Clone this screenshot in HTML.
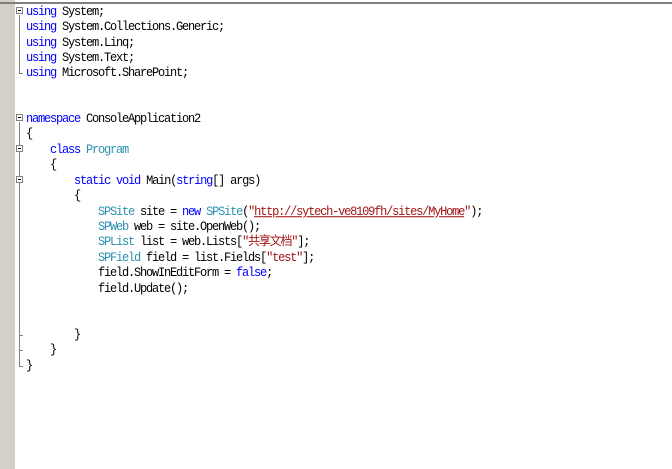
<!DOCTYPE html>
<html><head><meta charset="utf-8"><style>
body{margin:0;width:672px;height:469px;background:#fff;overflow:hidden;position:relative;font-family:"Liberation Mono","Noto Sans CJK SC",monospace;}
.g{position:absolute;left:0;top:0;width:15px;height:469px;background:#d4d0c8;}
.top{position:absolute;left:0;top:2px;width:672px;height:2px;background:#808080;}
.l{position:absolute;left:26px;font-size:12px;letter-spacing:-1.2px;line-height:14px;white-space:pre;color:#000;transform:scaleY(1.05);margin-top:1px}
.k{color:#0000ff}.t{color:#2b91af}.s{color:#a31515}.u{text-decoration:underline}
.f{position:absolute;left:16px;width:7px;height:7px;border:1px solid #808080;box-sizing:border-box;background:#fff;}
.f:after{content:"";position:absolute;left:1px;top:2px;width:3px;height:1px;background:#000}
.v{position:absolute;left:19px;width:1px;background:#808080}
.h{position:absolute;left:19px;height:1px;width:4px;background:#808080}
</style></head><body>
<div class="g"></div><div class="top"></div>
<div class="f" style="top:7px"></div><div class="v" style="top:15px;height:58px"></div><div class="h" style="top:73px"></div>
<div class="f" style="top:114px"></div><div class="v" style="top:122px;height:244px"></div><div class="h" style="top:366px"></div>
<div class="f" style="top:145px"></div><div class="f" style="top:176px"></div>
<div class="h" style="top:350px"></div><div class="h" style="top:335px"></div>
<div class="l" style="top:4px"><span class="k">using</span> System;</div>
<div class="l" style="top:19px"><span class="k">using</span> System.Collections.Generic;</div>
<div class="l" style="top:35px"><span class="k">using</span> System.Linq;</div>
<div class="l" style="top:50px"><span class="k">using</span> System.Text;</div>
<div class="l" style="top:65px"><span class="k">using</span> Microsoft.SharePoint;</div>
<div class="l" style="top:111px"><span class="k">namespace</span> ConsoleApplication2</div>
<div class="l" style="top:126px">{</div>
<div class="l" style="top:142px">    <span class="k">class</span> <span class="t">Program</span></div>
<div class="l" style="top:157px">    {</div>
<div class="l" style="top:173px">        <span class="k">static</span> <span class="k">void</span> Main(<span class="k">string</span>[] args)</div>
<div class="l" style="top:188px">        {</div>
<div class="l" style="top:204px">            <span class="t">SPSite</span> site = <span class="k">new</span> <span class="t">SPSite</span>(<span class="s">"<span class="u">http://sytech-ve8109fh/sites/MyHome</span>"</span>);</div>
<div class="l" style="top:219px">            <span class="t">SPWeb</span> web = site.OpenWeb();</div>
<div class="l" style="top:234px">            <span class="t">SPList</span> list = web.Lists[<span class="s">"共享文档"</span>];</div>
<div class="l" style="top:250px">            <span class="t">SPField</span> field = list.Fields[<span class="s">"test"</span>];</div>
<div class="l" style="top:265px">            field.ShowInEditForm = <span class="k">false</span>;</div>
<div class="l" style="top:281px">            field.Update();</div>
<div class="l" style="top:327px">        }</div>
<div class="l" style="top:342px">    }</div>
<div class="l" style="top:358px">}</div>
</body></html>
